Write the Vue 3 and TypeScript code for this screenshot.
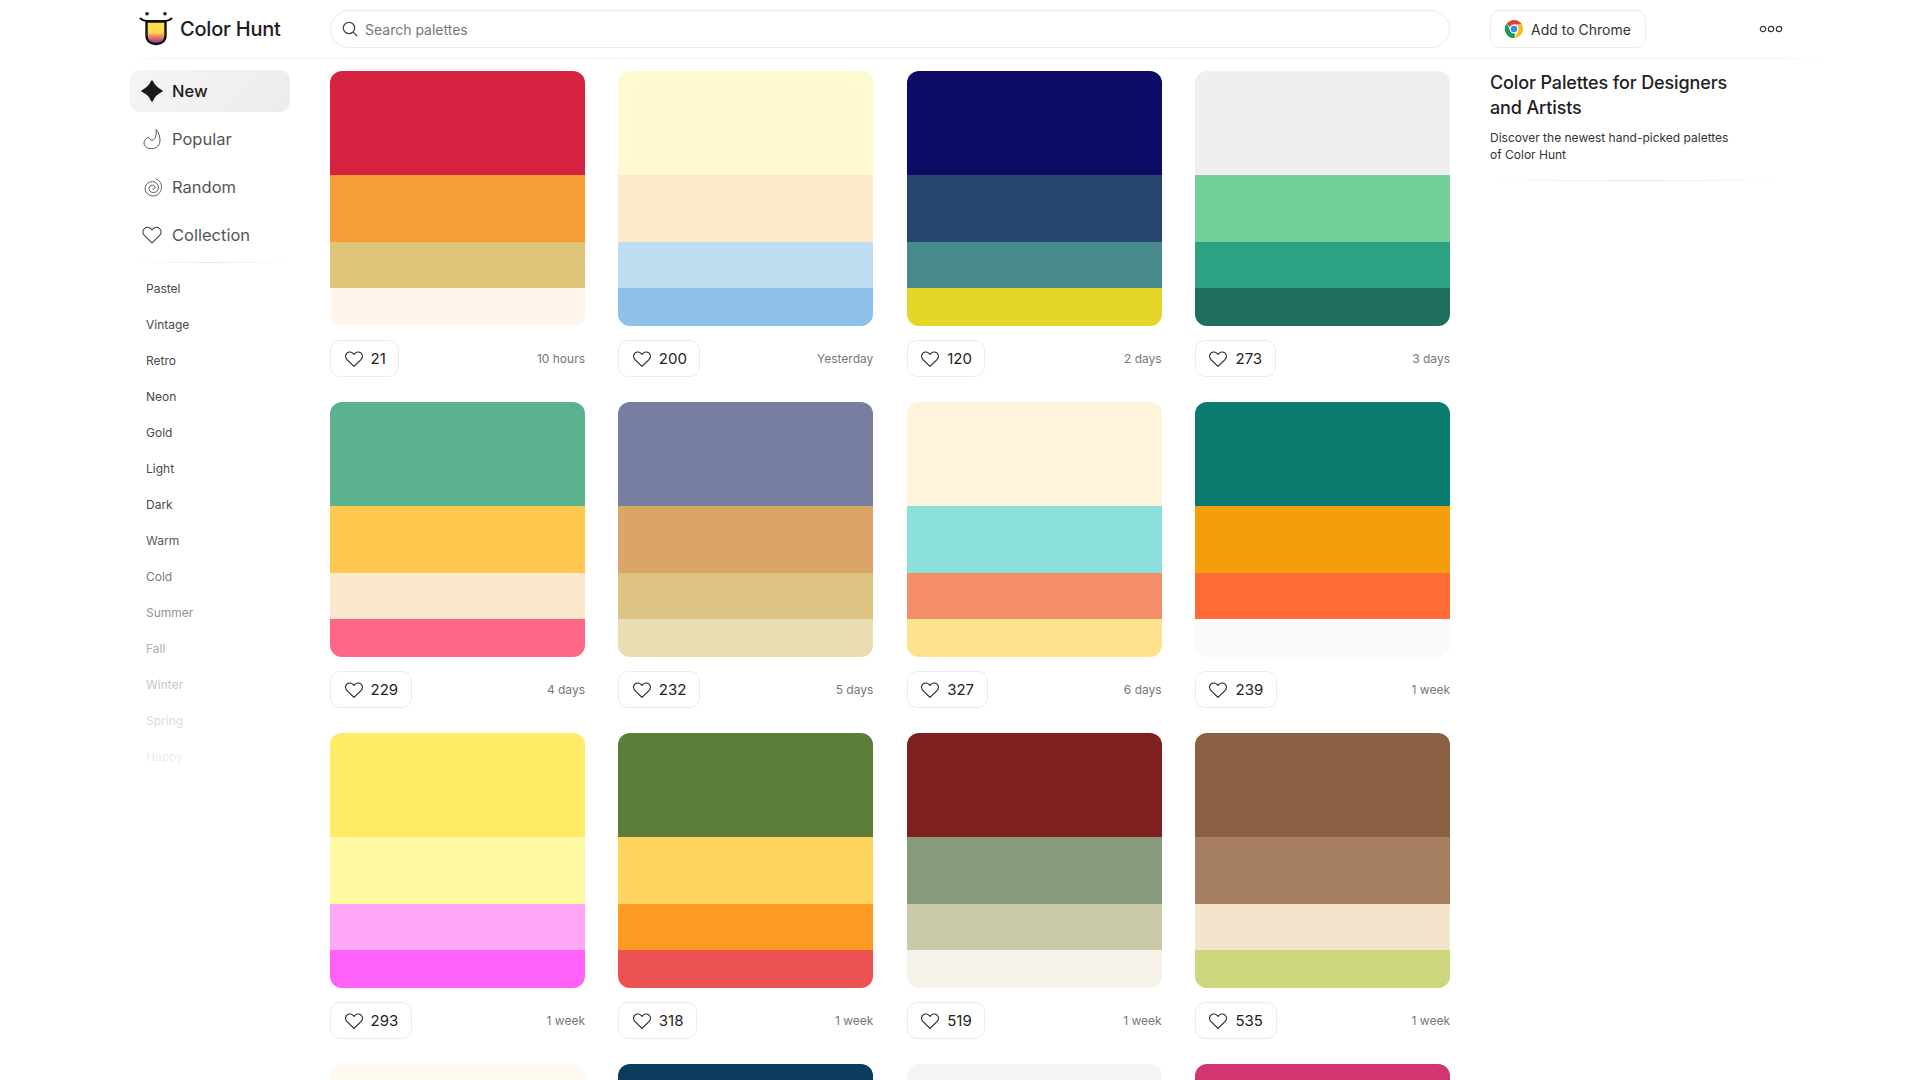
<script setup lang="ts">
interface Palette {
  colors: string[]
  likes: number
  time: string
}

const tags: { name: string; opacity: number }[] = [
  { name: 'Pastel', opacity: 1 },
  { name: 'Vintage', opacity: 1 },
  { name: 'Retro', opacity: 1 },
  { name: 'Neon', opacity: 1 },
  { name: 'Gold', opacity: 1 },
  { name: 'Light', opacity: 1 },
  { name: 'Dark', opacity: 1 },
  { name: 'Warm', opacity: 0.9 },
  { name: 'Cold', opacity: 0.75 },
  { name: 'Summer', opacity: 0.6 },
  { name: 'Fall', opacity: 0.45 },
  { name: 'Winter', opacity: 0.32 },
  { name: 'Spring', opacity: 0.2 },
  { name: 'Happy', opacity: 0.1 },
]

// the last row runs off the bottom of the page, so it has no footer
const palettes: Palette[] = [
  { colors: ['#D82241', '#F79D38', '#DFC376', '#FFF6E9'], likes: 21, time: '10 hours' },
  { colors: ['#FFF9D2', '#FFE9CB', '#BFDDF1', '#8EC1E9'], likes: 200, time: 'Yesterday' },
  { colors: ['#0D0B66', '#27456E', '#478A8D', '#E4D527'], likes: 120, time: '2 days' },
  { colors: ['#EFEFEF', '#72D19A', '#2DA283', '#1E6F5C'], likes: 273, time: '3 days' },
  { colors: ['#5BB28F', '#FFC94F', '#F9E8CB', '#FF6786'], likes: 229, time: '4 days' },
  { colors: ['#777E9F', '#DBA568', '#DCC283', '#E8DDB3'], likes: 232, time: '5 days' },
  { colors: ['#FFF3DB', '#8CE0DC', '#F48E68', '#FEE28D'], likes: 327, time: '6 days' },
  { colors: ['#0A7B6E', '#F59E0B', '#FF6B35', '#FAFAFA'], likes: 239, time: '1 week' },
  { colors: ['#FFEB66', '#FFF9A3', '#FFA6F6', '#FF62F9'], likes: 293, time: '1 week' },
  { colors: ['#5D7E3B', '#FFD45D', '#FF9B23', '#EB5353'], likes: 318, time: '1 week' },
  { colors: ['#801F20', '#869A7C', '#CACAA8', '#F6F2EA'], likes: 519, time: '1 week' },
  { colors: ['#8B5F41', '#A67E61', '#F2E5CB', '#CDD67C'], likes: 535, time: '1 week' },
  { colors: ['#FFFAF0', '#FFF3DB', '#FFE9CB', '#FFDDB0'], likes: 0, time: '' },
  { colors: ['#0B3C5D', '#328CC1', '#D9B310', '#F5F5F5'], likes: 0, time: '' },
  { colors: ['#F5F5F5', '#E8E8E8', '#CCCCCC', '#999999'], likes: 0, time: '' },
  { colors: ['#D2356F', '#F7A072', '#FFD07B', '#FFF1C9'], likes: 0, time: '' },
]

const bandHeights = [104, 67, 46, 38]
</script>

<template>
  <div class="page">
    <header class="topbar">
      <a class="brand">
        <svg class="logo" width="34" height="36" viewBox="0 0 34 36">
          <defs>
            <linearGradient id="tongue" x1="0" y1="0" x2="0" y2="1">
              <stop offset="0" stop-color="#ffe14d" />
              <stop offset="0.5" stop-color="#ffd84a" />
              <stop offset="0.64" stop-color="#f98a5a" />
              <stop offset="0.82" stop-color="#c0538a" />
              <stop offset="1" stop-color="#6c4b8c" />
            </linearGradient>
          </defs>
          <circle cx="8" cy="2.8" r="1.8" fill="#111" />
          <circle cx="26" cy="2.8" r="1.8" fill="#111" />
          <path d="M1.500 7.500c2 2 4 2.600 6.500 2.600h18c2.500 0 4.500-.6 6.500-2.600" fill="none" stroke="#111" stroke-width="2" stroke-linecap="round" />
          <path d="M7.500 10.500v14c0 5.500 4.200 8.500 9.500 8.500s9.500-3 9.500-8.500v-14z" fill="url(#tongue)" stroke="#111" stroke-width="2.400" />
        </svg>
        <span class="brand-name">Color Hunt</span>
      </a>
      <div class="search">
        <svg width="18" height="18" viewBox="0 0 18 18" fill="none" stroke="#444" stroke-width="1.200">
          <circle cx="8" cy="8" r="5.700" />
          <path d="M12.200 12.200 16 16" />
        </svg>
        <span>Search palettes</span>
      </div>
      <div class="top-right">
        <a class="chrome-btn">
          <svg width="18" height="18" viewBox="0 0 18 18">
            <path d="M9 0a9 9 0 0 1 7.800 4.500H9a4.500 4.500 0 0 0-4.200 2.900L1.900 3.500A9 9 0 0 1 9 0z" fill="#db4437" />
            <path d="M16.800 4.500A9 9 0 0 1 9.500 18l3.400-6.700A4.500 4.500 0 0 0 12.900 6.700L12 4.500z" fill="#f4c20d" />
            <path d="M1.900 3.500 5.200 11a4.500 4.500 0 0 0 4.900 2.400L9.500 18A9 9 0 0 1 1.900 3.500z" fill="#0f9d58" />
            <circle cx="9" cy="9" r="4.200" fill="#fff" />
            <circle cx="9" cy="9" r="3.300" fill="#4285f4" />
          </svg>
          <span>Add to Chrome</span>
        </a>
        <svg class="more" width="24" height="8" viewBox="0 0 24 8" fill="none" stroke="#333" stroke-width="1.200">
          <circle cx="4" cy="4" r="2.700" />
          <circle cx="12" cy="4" r="2.700" />
          <circle cx="20" cy="4" r="2.700" />
        </svg>
      </div>
    </header>

    <div class="layout">
      <aside class="sidebar">
        <nav class="nav">
          <a class="nav-item active">
            <svg width="22" height="22" viewBox="0 0 22 22">
              <path d="M11 1.200Q14 8 20.800 11 14 14 11 20.800 8 14 1.200 11 8 8 11 1.200z" fill="#1a1a1a" stroke="#1a1a1a" stroke-width="1.800" stroke-linejoin="round" />
            </svg>
            <span>New</span>
          </a>
          <a class="nav-item">
            <svg width="22" height="22" viewBox="0 0 22 22" fill="none" stroke="#555" stroke-width="1">
              <path d="M15 1.500C16 6 14.500 10.500 12.300 12 10.500 12.800 8.300 11.500 7.500 9.200 5 10.500 3 12.500 3 15 3 18.500 6.500 20.700 10.500 20.700 15.500 20.700 19 17 19 12.500 19 8 17.500 4 15 1.500z" stroke-linejoin="round" />
            </svg>
            <span>Popular</span>
          </a>
          <a class="nav-item">
            <svg width="22" height="22" viewBox="0 0 22 22" fill="none" stroke="#555" stroke-width="0.900">
              <path d="M15 2.800A9 9 0 0 1 20.500 11.500 8.500 8.500 0 0 1 12 20 8 8 0 0 1 4 12 7.500 7.500 0 0 1 11.500 5.500 6.500 6.500 0 0 1 17.500 12 5.500 5.500 0 0 1 12 16.500 4.500 4.500 0 0 1 8 12 3.700 3.700 0 0 1 12 9 2.800 2.800 0 0 1 14 11.500 2 2 0 0 1 12 13.300" stroke-linecap="round" />
            </svg>
            <span>Random</span>
          </a>
          <a class="nav-item">
            <svg width="22" height="22" viewBox="0 0 24 24" fill="none" stroke="#444" stroke-width="1.200">
              <path d="M12 20.500 3.800 12.600C1.600 10.400 1.600 7 3.700 5c2.100-1.900 5.300-1.700 7.200.3l1.100 1.200 1.100-1.200c1.900-2 5.100-2.200 7.200-.3 2.100 2 2.100 5.400-.1 7.600z" stroke-linejoin="round" />
            </svg>
            <span>Collection</span>
          </a>
        </nav>
        <div class="fade-line nav-divider" />
        <ul class="tags">
          <li v-for="tag in tags" :key="tag.name" :style="{ opacity: tag.opacity }">{{ tag.name }}</li>
        </ul>
      </aside>

      <main class="feed">
        <article v-for="(p, i) in palettes" :key="i" class="card">
          <div class="palette">
            <div
              v-for="(c, n) in p.colors"
              :key="n"
              class="band"
              :style="{ background: c, height: bandHeights[n] + 'px' }"
            />
          </div>
          <div v-if="p.time" class="meta">
            <button class="like">
              <svg width="20" height="20" viewBox="0 0 24 24" fill="none" stroke="#222" stroke-width="1.300">
                <path d="M12 20.800 3.600 12.700C1.300 10.400 1.300 6.900 3.500 4.900c2.200-2 5.500-1.800 7.400.3L12 6.400l1.100-1.200c1.900-2.100 5.200-2.300 7.400-.3 2.200 2 2.200 5.500-.1 7.800z" stroke-linejoin="round" />
              </svg>
              <span>{{ p.likes }}</span>
            </button>
            <span class="time">{{ p.time }}</span>
          </div>
        </article>
      </main>

      <aside class="intro">
        <h1>Color Palettes for Designers and Artists</h1>
        <p>Discover the newest hand-picked palettes of Color Hunt</p>
        <div class="fade-line intro-divider" />
      </aside>
    </div>
  </div>
</template>

<style>
html,
body {
  margin: 0;
  background: #fff;
  overflow: hidden;
}
</style>

<style scoped>
.page {
  height: 1080px;
  overflow: hidden;
  font-family: Inter, "Liberation Sans", sans-serif;
  color: #222;
}

.topbar {
  display: flex;
  align-items: center;
  height: 59px;
  padding-left: 139px;
  padding-bottom: 1px;
  box-sizing: border-box;
  position: relative;
}

.topbar::after {
  content: '';
  position: absolute;
  left: 130px;
  width: 1700px;
  bottom: 0;
  height: 1px;
  background: linear-gradient(to right, transparent, #f2f2f2 40px, #f2f2f2 1640px, transparent);
}

.brand {
  display: flex;
  align-items: center;
  width: 191px;
  gap: 7px;
}

.brand-name {
  font-size: 20px;
  font-weight: 500;
  color: #1c1c1c;
  letter-spacing: -0.2px;
}

.search {
  display: flex;
  align-items: center;
  gap: 6px;
  width: 1120px;
  height: 38px;
  box-sizing: border-box;
  padding: 0 10px;
  border: 1px solid #ececec;
  border-radius: 19px;
  font-size: 14px;
  color: #777;
}

.top-right {
  display: flex;
  align-items: center;
  margin-left: 40px;
}

.chrome-btn {
  display: flex;
  align-items: center;
  gap: 8px;
  height: 38px;
  box-sizing: border-box;
  padding: 0 14px;
  border: 1px solid #ececec;
  border-radius: 10px;
  font-size: 14px;
  color: #333;
}

.more {
  margin-left: 113px;
}

.layout {
  display: flex;
  align-items: flex-start;
  padding-left: 130px;
}

.sidebar {
  width: 160px;
  padding-top: 11px;
  flex: none;
}

.nav {
  display: flex;
  flex-direction: column;
  gap: 6px;
}

.nav-item {
  display: flex;
  align-items: center;
  gap: 9px;
  height: 42px;
  padding-left: 11px;
  border-radius: 10px;
  font-size: 16.500px;
  color: #555;
}

.nav-item.active {
  background: linear-gradient(135deg, #f5f5f5, #ececec);
  color: #1a1a1a;
  font-weight: 500;
}

.fade-line {
  height: 1px;
  background: linear-gradient(to right, transparent, #e8e8e8 50%, transparent);
}

.nav-divider {
  margin: 6px 0 0 3px;
  width: 157px;
}

.tags {
  list-style: none;
  margin: 8px 0 0;
  padding: 0 0 0 16px;
}

.tags li {
  height: 36px;
  line-height: 36px;
  font-size: 12px;
  color: #4a4a4a;
}

.feed {
  display: grid;
  grid-template-columns: repeat(4, 1fr);
  column-gap: 33.33px;
  row-gap: 25px;
  width: 1120px;
  margin-left: 40px;
  padding-top: 12px;
  flex: none;
}

.palette {
  height: 255px;
  border-radius: 12px;
  overflow: hidden;
}

.band {
  width: 100%;
}

.meta {
  display: flex;
  align-items: center;
  justify-content: space-between;
  margin-top: 14px;
}

.like {
  display: flex;
  align-items: center;
  gap: 7px;
  height: 37px;
  padding: 0 12.5px;
  background: #fff;
  border: 1px solid #ececec;
  border-radius: 10px;
  font-family: inherit;
  font-size: 15px;
  color: #222;
}

.time {
  font-size: 12px;
  color: #777;
}

.intro {
  width: 290px;
  margin-left: 40px;
  padding-top: 11px;
  flex: none;
}

.intro h1 {
  margin: 0;
  width: 250px;
  font-size: 18px;
  line-height: 25px;
  font-weight: 500;
  color: #222;
  letter-spacing: -0.13px;
}

.intro p {
  margin: 9px 0 0;
  width: 250px;
  font-size: 12px;
  line-height: 17px;
  color: #333;
}

.intro-divider {
  margin-top: 17px;
}
</style>
